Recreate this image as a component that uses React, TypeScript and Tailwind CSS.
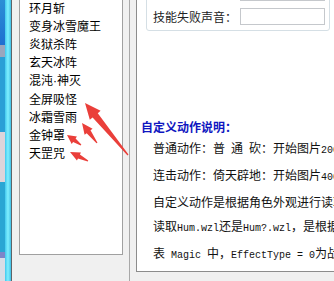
const skills = [
  "环月斩",
  "变身冰雪魔王",
  "炎狱杀阵",
  "玄天冰阵",
  "混沌·神灭",
  "全屏吸怪",
  "冰霜雪雨",
  "金钟罩",
  "天罡咒",
];

type ArrowProps = { x1: number; y1: number; x2: number; y2: number; head: number; width: number };

// tapered red arrow, tail (x1,y1) -> tip (x2,y2)
function Arrow({ x1, y1, x2, y2, head, width }: ArrowProps) {
  const dx = x2 - x1;
  const dy = y2 - y1;
  const len = Math.hypot(dx, dy);
  const ux = dx / len;
  const uy = dy / len;
  const nx = -uy;
  const ny = ux;
  const bx = x2 - ux * head;
  const by = y2 - uy * head;
  const s = width * 0.24;
  const pts = [
    [x1 + nx * 0.6, y1 + ny * 0.6],
    [bx + nx * s, by + ny * s],
    [bx + (nx * width) / 2, by + (ny * width) / 2],
    [x2, y2],
    [bx - (nx * width) / 2, by - (ny * width) / 2],
    [bx - nx * s, by - ny * s],
    [x1 - nx * 0.6, y1 - ny * 0.6],
  ];
  return <polygon points={pts.map((p) => p.join(",")).join(" ")} fill="#ea3f3a" />;
}

const mono = "font-['Liberation_Mono',monospace] text-[10px]";

function SkillName({ name }: { name: string }) {
  const parts = name.split("·");
  if (parts.length < 2) return <>{name}</>;
  return (
    <>
      {parts[0]}
      <span className="font-['Liberation_Sans',sans-serif]">·</span>
      {parts[1]}
    </>
  );
}

function App() {
  return (
    <div className="relative flex w-[334px] h-[281px] overflow-hidden bg-[#f0f0f0] font-['Noto_Sans_CJK_SC',sans-serif] text-[12px] text-black">
      {/* left edge of the neighbour window */}
      <div className="flex h-full">
        <div className="flex flex-col w-[5px]">
          <div className="h-[45px] bg-gradient-to-b from-[#2c8fd6] to-[#1f6fd0]" />
          <div className="h-[12px] bg-[#9aa6bd]" />
          <div className="h-[75px] bg-[#2a9fd6]" />
          <div className="h-[50px] bg-[#ddd4da]" />
          <div className="h-[70px] bg-[#29a6d4]" />
          <div className="h-[6px] bg-[#7d86c8]" />
          <div className="flex-1 bg-[#d8dde6]" />
        </div>
        <div className="w-[6px] bg-gradient-to-r from-[#3fc8ee] via-[#7ff0ff] to-[#3fbfe6]" />
        <div className="w-px bg-[#5e6468]" />
      </div>

      {/* skill list */}
      <div className="ml-[7px] w-[104px] h-[255px] border border-t-0 border-[#a0a0a0] bg-white overflow-hidden">
        <ul className="-mt-px pl-[9px] leading-[18px] whitespace-nowrap">
          {skills.map((s) => (
            <li key={s}>
              <SkillName name={s} />
            </li>
          ))}
        </ul>
      </div>

      {/* splitter */}
      <div className="w-[13px] h-full flex">
        <div className="ml-[6px] w-px h-full bg-[#a8a8a8]" />
      </div>

      {/* right panel */}
      <div className="flex-1 h-[272px] min-w-0 border-l border-b border-[#8c8c8c] bg-white overflow-hidden whitespace-nowrap">
        <div className="ml-[9px] w-[184px] h-[61px] -mt-[30px] flex flex-col justify-end gap-[7px] rounded-[3px] border border-[#d5dfe5] pb-[5px]">
          <div className="ml-[93px] w-[85px] h-[17px] border border-[#c5c8cc] bg-white" />
          <div className="flex items-center">
            <span className="ml-[6px] w-[87px] leading-[17px] text-[#222]">技能失败声音：</span>
            <div className="w-[85px] h-[17px] border border-[#c5c8cc] bg-white" />
          </div>
        </div>

        <div className="mt-[87px] ml-[4px] font-bold text-[#0f16c0] leading-[18px]">自定义动作说明：</div>
        <div className="ml-[16px] leading-[24px] text-[#111]">
          <p>
            普通动作：普<span className={mono}> </span>通<span className={mono}> </span>砍：开始图片
            <span className={mono}>2000</span>
          </p>
          <p>
            连击动作：倚天辟地：开始图片<span className={mono}>4000</span>
          </p>
          <p>自定义动作是根据角色外观进行读取</p>
          <p>
            读取<span className={mono}>Hum.wzl</span>还是<span className={mono}>Hum?.wzl</span>，是根据
          </p>
          <p>
            表<span className={mono}> Magic </span>中，<span className={mono}>EffectType = 0</span>为战
          </p>
        </div>
      </div>

      <svg className="absolute inset-0 pointer-events-none" width="334" height="281" viewBox="0 0 334 281">
        <Arrow x1={128} y1={155} x2={85} y2={103} head={16} width={14} />
        <Arrow x1={97} y1={143} x2={82} y2={123} head={11} width={10} />
        <Arrow x1={81} y1={145} x2={67} y2={135} head={9} width={9} />
        <Arrow x1={88} y1={161} x2={70} y2={152} head={10} width={9} />
      </svg>
    </div>
  );
}

export default App;
